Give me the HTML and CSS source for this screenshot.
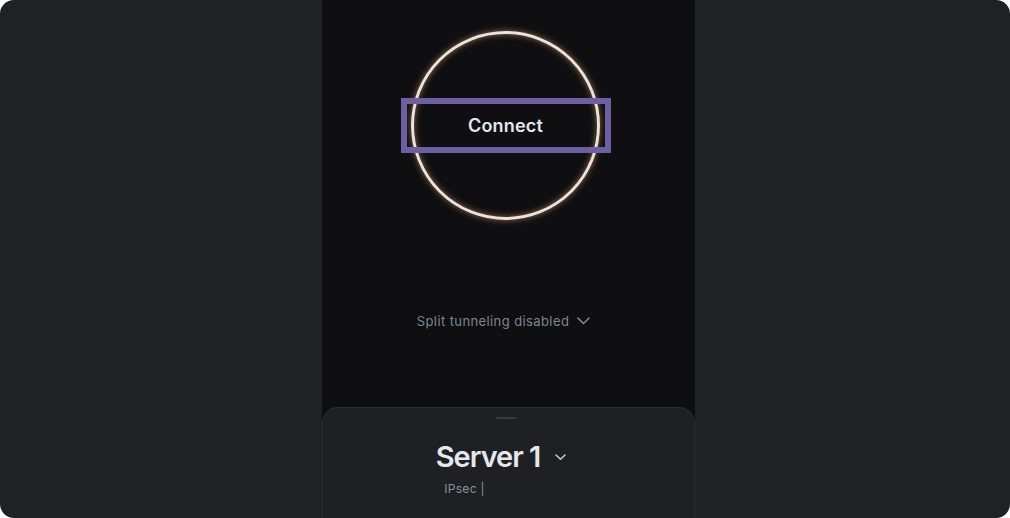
FILE: index.html
```html
<!DOCTYPE html>
<html lang="en">
<head>
    <meta charset="UTF-8">
    <title>VPN</title>
    <link rel="stylesheet" href="styles.css">
</head>
<body>
    <div class="app">
        <div class="side"></div>
        <div class="panel">
            <div class="main">
                <div class="ring">
                    <button class="connect">Connect</button>
                </div>
                <div class="split">
                    <span>Split tunneling disabled</span>
                    <svg width="13" height="8" viewBox="0 0 13 8"><path d="M1 1.2l5.5 5.3L12 1.2" fill="none" stroke="#7c8591" stroke-width="1.6" stroke-linecap="round" stroke-linejoin="round"/></svg>
                </div>
            </div>
            <div class="sheet">
                <div class="handle"></div>
                <div class="server">
                    <span class="server-name">Server 1</span>
                    <svg width="11" height="7" viewBox="0 0 11 7"><path d="M1 1l4.5 4.3L10 1" fill="none" stroke="#c9ccd2" stroke-width="1.5" stroke-linecap="round" stroke-linejoin="round"/></svg>
                </div>
                <div class="protocol">IPsec <span class="bar">|</span></div>
            </div>
        </div>
        <div class="side"></div>
    </div>
</body>
</html>
```

FILE: styles.css
```css
body {
    margin: 0;
    background: #ffffff;
    font-family: Inter, "Noto Sans", sans-serif;
}
.app {
    width: 1010px;
    height: 518px;
    display: flex;
    background-color: #202125;
    border-radius: 14px;
    overflow: hidden;
}
.side {
    flex: 1;
}
.side:first-child {
    flex: 0 0 322px;
}
.panel {
    width: 373px;
    display: flex;
    flex-direction: column;
    background-color: #0f0f11;
}
.main {
    flex: 1;
    display: flex;
    flex-direction: column;
    align-items: center;
    padding: 31px 6px 0 0;
}
.ring {
    width: 183px;
    height: 183px;
    border: 3px solid #ebe3dc;
    border-radius: 50%;
    display: flex;
    align-items: center;
    justify-content: center;
    box-shadow: 0 0 6px rgba(255, 176, 120, 0.55), inset 0 0 6px rgba(255, 176, 120, 0.55);
}
.connect {
    flex: none;
    width: 210px;
    height: 55px;
    border: 6px solid #6e5ea2;
    background: transparent;
    color: #e2e8f0;
    font-family: Inter, "Noto Sans", sans-serif;
    font-size: 18px;
    font-weight: 600;
    letter-spacing: 0.2px;
    padding: 0;
    cursor: pointer;
}
.split {
    margin-top: 93px;
    margin-right: 4px;
    display: flex;
    align-items: center;
    gap: 8px;
    color: #7c8591;
    font-size: 13px;
    letter-spacing: 0.4px;
}
.sheet {
    height: 111px;
    box-sizing: border-box;
    background-color: #1f2024;
    border: 1px solid #2c2e33;
    border-bottom: none;
    border-radius: 16px 16px 0 0;
    display: flex;
    flex-direction: column;
    align-items: center;
    padding: 9px 6px 0 0;
}
.handle {
    width: 20px;
    height: 2px;
    background-color: #3a3c42;
    border-radius: 1px;
}
.server {
    margin-top: 20px;
    margin-right: 9px;
    display: flex;
    align-items: center;
    gap: 15px;
}
.server-name {
    color: #e4e7eb;
    font-size: 29px;
    font-weight: 600;
    letter-spacing: -1px;
    line-height: 36px;
}
.protocol {
    margin-top: 6px;
    margin-right: 82px;
    color: #8b9098;
    font-size: 12px;
    letter-spacing: 0.3px;
}
```
